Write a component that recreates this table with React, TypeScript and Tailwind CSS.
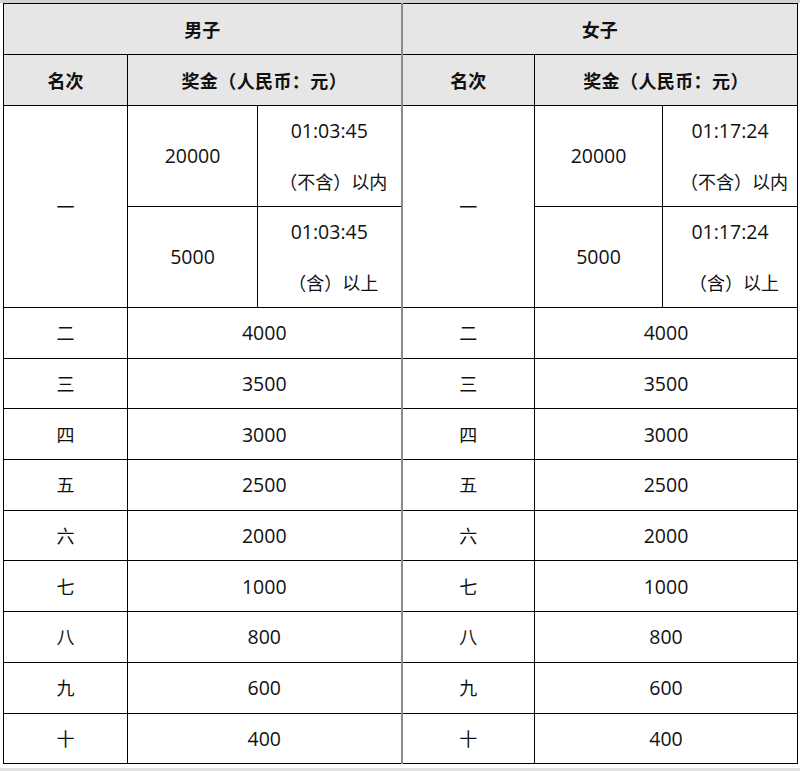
const ranks = [
  { rank: '二', prize: '4000' },
  { rank: '三', prize: '3500' },
  { rank: '四', prize: '3000' },
  { rank: '五', prize: '2500' },
  { rank: '六', prize: '2000' },
  { rank: '七', prize: '1000' },
  { rank: '八', prize: '800' },
  { rank: '九', prize: '600' },
  { rank: '十', prize: '400' },
];

const cjk = "font-['Noto_Sans_CJK_SC',sans-serif] text-[18px]";
const num = "font-['Open_Sans','Noto_Sans_CJK_SC',sans-serif] text-[19.5px]";
const cell = 'border border-black p-0 text-center align-middle text-[#111]';
const divider = 'border-l-2 border-l-[#8a8a8a]';

function TimeCell({ time, note, right }: { time: string; note: string; right?: boolean }) {
  return (
    <td className={`${cell} ${right ? 'border-l-[#8a8a8a]' : ''}`}>
      <div className={`h-[50px] flex items-center justify-center ${num}`}>{time}</div>
      <div className={`h-[50px] flex items-center justify-center pl-[8px] ${cjk}`}>{note}</div>
    </td>
  );
}

export default function App() {
  return (
    <div className="w-[800px] h-[771px] bg-white relative">
      <div className="h-[3px] bg-[#d2d2d2]" />
      <div className="pl-[3px]">
        <table className="table-fixed border-collapse w-[794px] border-[1.5px] border-black">
          <colgroup>
            <col className="w-[124px]" />
            <col className="w-[130px]" />
            <col className="w-[144px]" />
            <col className="w-[133px]" />
            <col className="w-[128px]" />
            <col className="w-[135px]" />
          </colgroup>
          <thead>
            <tr className="h-[51px] bg-[#e6e6e6]">
              <th colSpan={3} className={`${cell} ${cjk} font-bold`}>男子</th>
              <th colSpan={3} className={`${cell} ${cjk} font-bold ${divider}`}>女子</th>
            </tr>
            <tr className="h-[51px] bg-[#e6e6e6]">
              <th className={`${cell} ${cjk} font-bold`}>名次</th>
              <th colSpan={2} className={`${cell} ${cjk} font-bold tracking-[0.4px]`}>奖金（人民币：元）</th>
              <th className={`${cell} ${cjk} font-bold ${divider}`}>名次</th>
              <th colSpan={2} className={`${cell} ${cjk} font-bold tracking-[0.4px]`}>奖金（人民币：元）</th>
            </tr>
          </thead>
          <tbody>
            <tr className="h-[100px]">
              <td rowSpan={2} className={`${cell} ${cjk}`}>一</td>
              <td className={`${cell} ${num}`}>20000</td>
              <TimeCell time="01:03:45" note="（不含）以内" />
              <td rowSpan={2} className={`${cell} ${cjk} ${divider}`}>一</td>
              <td className={`${cell} ${num}`}>20000</td>
              <TimeCell time="01:17:24" note="（不含）以内" right />
            </tr>
            <tr className="h-[100px]">
              <td className={`${cell} ${num}`}>5000</td>
              <TimeCell time="01:03:45" note="（含）以上" />
              <td className={`${cell} ${num}`}>5000</td>
              <TimeCell time="01:17:24" note="（含）以上" right />
            </tr>
            {ranks.map((r) => (
              <tr key={r.rank} className="h-[50.7px]">
                <td className={`${cell} ${cjk}`}>{r.rank}</td>
                <td colSpan={2} className={`${cell} ${num}`}>{r.prize}</td>
                <td className={`${cell} ${cjk} ${divider}`}>{r.rank}</td>
                <td colSpan={2} className={`${cell} ${num}`}>{r.prize}</td>
              </tr>
            ))}
          </tbody>
        </table>
      </div>
      <div className="absolute left-0 right-0 bottom-0 h-[3px] bg-[#e2e2e2]" />
    </div>
  );
}
